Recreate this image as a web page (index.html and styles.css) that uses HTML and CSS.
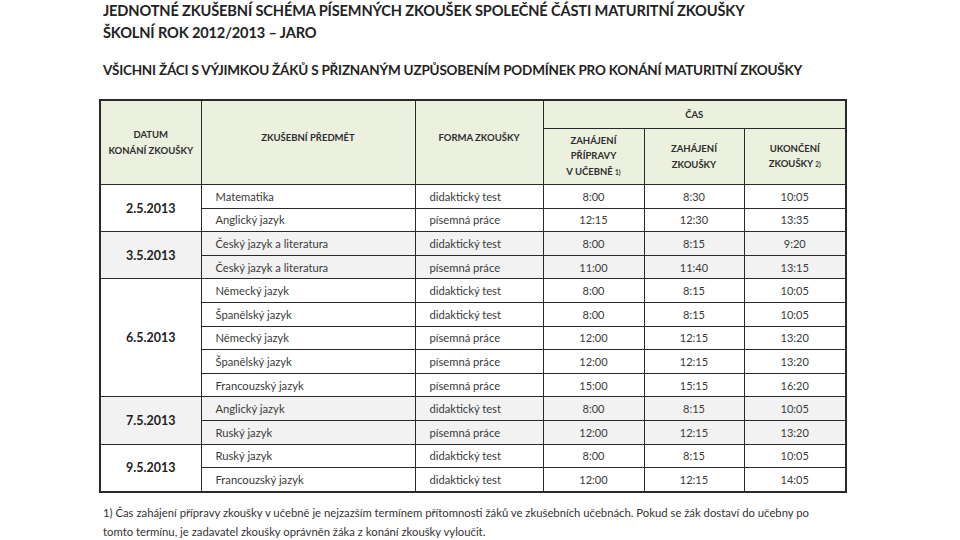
FILE: index.html
```html
<!DOCTYPE html>
<html lang="cs">
<head>
<meta charset="utf-8">
<link rel="stylesheet" href="styles.css">
</head>
<body>
<div class="page">
  <h1 class="title">JEDNOTNÉ ZKUŠEBNÍ SCHÉMA PÍSEMNÝCH ZKOUŠEK SPOLEČNÉ ČÁSTI MATURITNÍ ZKOUŠKY</h1>
  <h1 class="title t2">ŠKOLNÍ ROK 2012/2013 – JARO</h1>
  <h2 class="subtitle">VŠICHNI ŽÁCI S VÝJIMKOU ŽÁKŮ S PŘIZNANÝM UZPŮSOBENÍM PODMÍNEK PRO KONÁNÍ MATURITNÍ ZKOUŠKY</h2>
  <table class="sched">
    <colgroup>
      <col class="c1"><col class="c2"><col class="c3"><col class="c4"><col class="c5"><col class="c6">
    </colgroup>
    <thead>
      <tr class="h1r">
        <th rowspan="2">DATUM<br>KONÁNÍ ZKOUŠKY</th>
        <th rowspan="2" class="top">ZKUŠEBNÍ PŘEDMĚT</th>
        <th rowspan="2" class="top">FORMA ZKOUŠKY</th>
        <th colspan="3">ČAS</th>
      </tr>
      <tr class="h2r">
        <th>ZAHÁJENÍ<br>PŘÍPRAVY<br>V UČEBNĚ <span class="sm">1)</span></th>
        <th>ZAHÁJENÍ<br>ZKOUŠKY</th>
        <th>UKONČENÍ<br>ZKOUŠKY <span class="sm">2)</span></th>
      </tr>
    </thead>
    <tbody>
      <tr><td rowspan="2" class="date">2.5.2013</td><td class="l">Matematika</td><td class="l">didaktický test</td><td>8:00</td><td>8:30</td><td>10:05</td></tr>
      <tr><td class="l">Anglický jazyk</td><td class="l">písemná práce</td><td>12:15</td><td>12:30</td><td>13:35</td></tr>
      <tr class="g"><td rowspan="2" class="date">3.5.2013</td><td class="l">Český jazyk a literatura</td><td class="l">didaktický test</td><td>8:00</td><td>8:15</td><td>9:20</td></tr>
      <tr class="g"><td class="l">Český jazyk a literatura</td><td class="l">písemná práce</td><td>11:00</td><td>11:40</td><td>13:15</td></tr>
      <tr><td rowspan="5" class="date">6.5.2013</td><td class="l">Německý jazyk</td><td class="l">didaktický test</td><td>8:00</td><td>8:15</td><td>10:05</td></tr>
      <tr><td class="l">Španělský jazyk</td><td class="l">didaktický test</td><td>8:00</td><td>8:15</td><td>10:05</td></tr>
      <tr><td class="l">Německý jazyk</td><td class="l">písemná práce</td><td>12:00</td><td>12:15</td><td>13:20</td></tr>
      <tr><td class="l">Španělský jazyk</td><td class="l">písemná práce</td><td>12:00</td><td>12:15</td><td>13:20</td></tr>
      <tr><td class="l">Francouzský jazyk</td><td class="l">písemná práce</td><td>15:00</td><td>15:15</td><td>16:20</td></tr>
      <tr class="g"><td rowspan="2" class="date">7.5.2013</td><td class="l">Anglický jazyk</td><td class="l">didaktický test</td><td>8:00</td><td>8:15</td><td>10:05</td></tr>
      <tr class="g"><td class="l">Ruský jazyk</td><td class="l">písemná práce</td><td>12:00</td><td>12:15</td><td>13:20</td></tr>
      <tr><td rowspan="2" class="date">9.5.2013</td><td class="l">Ruský jazyk</td><td class="l">didaktický test</td><td>8:00</td><td>8:15</td><td>10:05</td></tr>
      <tr><td class="l">Francouzský jazyk</td><td class="l">didaktický test</td><td>12:00</td><td>12:15</td><td>14:05</td></tr>
    </tbody>
  </table>
  <p class="note">1) Čas zahájení přípravy zkoušky v učebně je nejzazším termínem přítomnosti žáků ve zkušebních učebnách. Pokud se žák dostaví do učebny po<br>tomto termínu, je zadavatel zkoušky oprávněn žáka z konání zkoušky vyloučit.</p>
</div>
</body>
</html>
```

FILE: styles.css
```css
html, body {
  margin: 0;
  padding: 0;
  background: #ffffff;
}
.page {
  width: 960px;
  height: 540px;
  overflow: hidden;
  padding: 0 0 0 99px;
  box-sizing: border-box;
  font-family: Lato, "Open Sans", "Liberation Sans", sans-serif;
  color: #2b2b2b;
}
.title {
  margin: 0;
  padding: 2px 0 0 4px;
  font-size: 14.6px;
  line-height: 18px;
  font-weight: 700;
  letter-spacing: -0.15px;
  color: #222;
  white-space: nowrap;
}
.t2 {
  padding-top: 4px;
}
.subtitle {
  margin: 0;
  padding: 19px 0 0 4px;
  font-size: 13.5px;
  line-height: 18px;
  font-weight: 700;
  letter-spacing: -0.2px;
  color: #222;
  white-space: nowrap;
}
.sched {
  margin-top: 20px;
  border-collapse: collapse;
  table-layout: fixed;
  width: 746px;
  border: 2px solid #2a2a2a;
}
.c1 { width: 101px; }
.c2 { width: 214px; }
.c3 { width: 128px; }
.c4 { width: 101px; }
.c5 { width: 100px; }
.c6 { width: 102px; }
.sched th, .sched td {
  border: 1.6px solid #2a2a2a;
  padding: 0;
}
.sched th {
  background: #ebf1de;
  font-size: 9.5px;
  font-weight: 700;
  line-height: 15.5px;
  color: #2e2e2e;
  text-align: center;
}
.sched th.top {
  vertical-align: top;
  padding-top: 29px;
}
.h1r th { height: 27px; }
.h2r th { height: 55px; }
.sm { font-size: 6.5px; }
.sched td {
  height: 22.6px;
  font-size: 11px;
  color: #3a3a3a;
  text-align: center;
  background: #ffffff;
}
.sched tr.g td { background: #f2f2f2; }
.sched td.l {
  text-align: left;
  padding-left: 14px;
  font-size: 11.2px;
}
.sched td.date {
  font-size: 12.5px;
  font-weight: 700;
  color: #222;
}
.note {
  margin: 10px 0 0 4px;
  font-size: 11.3px;
  line-height: 19px;
  color: #333;
  white-space: nowrap;
}
```
